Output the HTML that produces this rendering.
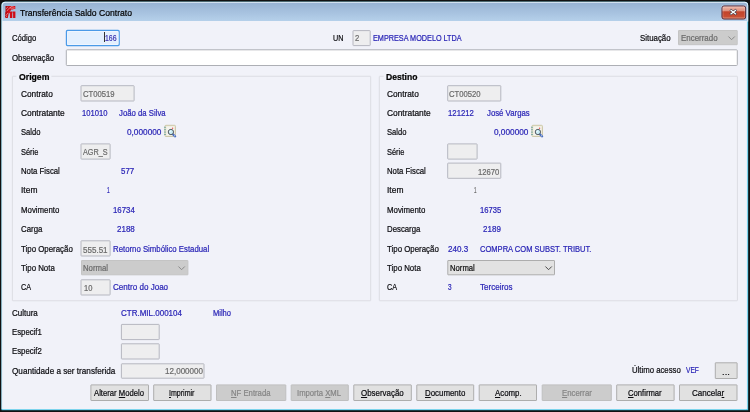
<!DOCTYPE html>
<html><head><meta charset="utf-8"><title>Transferência Saldo Contrato</title>
<style>
html,body{margin:0;padding:0;background:#111;}
body{filter:blur(0.3px);width:750px;height:412px;position:relative;overflow:hidden;font-family:"Liberation Sans",sans-serif;}
.t{position:absolute;white-space:pre;-webkit-text-stroke:0.22px currentColor;font-size:8.8px;line-height:12px;height:12px;transform-origin:0 0;}
.t u{text-decoration:underline;text-decoration-thickness:0.7px;text-underline-offset:0.8px;}
svg{position:absolute;overflow:visible;}
</style></head><body>
<svg style="left:0;top:0" width="750" height="412" viewBox="0 0 750 412">
<defs><linearGradient id="tg" x1="0" y1="0" x2="0" y2="1"><stop offset="0" stop-color="#97b3d4"/><stop offset="0.3" stop-color="#a0bbda"/><stop offset="1" stop-color="#b5d0ea"/></linearGradient></defs>
<path d="M1.5 410.2 V5.4 Q1.5 1.7 5.2 1.7 H744.5 Q748.2 1.7 748.2 5.4 V410.2 Z" fill="#35c1e4"/>
<path d="M1.5 409.2 V5.4 Q1.5 1.7 5.2 1.7 H744.5 Q748.2 1.7 748.2 5.4 V21.4 H747.4 V409.2 Z" fill="#e6f0fa"/>
<path d="M2.5 21 V6 Q2.5 2.7 5.8 2.7 H744.1 Q747.4 2.7 747.4 6 V21 Z" fill="url(#tg)"/>
<rect x="3.1" y="21" width="743" height="388.2" fill="#f1f2f9"/>
</svg>
<svg style="left:0;top:0" width="750" height="412" viewBox="0 0 750 412">
<rect x="12.35" y="76.25" width="358.35" height="224.50" rx="0.5" fill="none" stroke="#dcdde3"/>
<rect x="379.30" y="76.25" width="358.10" height="224.50" rx="0.5" fill="none" stroke="#dcdde3"/>
<rect x="16.4" y="72.0" width="35.0" height="10.0" fill="#f1f2f9"/>
<rect x="383.7" y="72.0" width="35.9" height="10.0" fill="#f1f2f9"/>
<rect x="66.45" y="30.45" width="52.70" height="15.10" rx="1" fill="#e4f0fe" stroke="#4a9ae8" stroke-width="1.3"/>
<rect x="67.50" y="31.50" width="50.60" height="13.00" rx="0.8" fill="none" stroke="#f3f8ff" stroke-width="0.8"/>
<rect x="353.00" y="30.60" width="17.20" height="15.00" rx="0.5" fill="#eeeeef" stroke="#b6b7c0"/>
<rect x="678.50" y="30.50" width="58.70" height="14.20" rx="0.3" fill="#cccccc" stroke="#c4c4c4"/>
<rect x="66.30" y="49.80" width="671.00" height="15.70" rx="0.8" fill="#ffffff" stroke="#adafb5"/>
<rect x="81.00" y="85.70" width="53.10" height="15.30" rx="0.5" fill="#eeeeef" stroke="#b6b7c0"/>
<rect x="81.00" y="143.90" width="29.10" height="15.20" rx="0.5" fill="#eeeeef" stroke="#b6b7c0"/>
<rect x="81.00" y="240.80" width="29.10" height="15.20" rx="0.5" fill="#eeeeef" stroke="#b6b7c0"/>
<rect x="81.00" y="279.80" width="29.10" height="15.20" rx="0.5" fill="#eeeeef" stroke="#b6b7c0"/>
<rect x="81.50" y="260.50" width="106.40" height="14.30" rx="0.3" fill="#cccccc" stroke="#c4c4c4"/>
<rect x="447.70" y="85.70" width="53.10" height="15.30" rx="0.5" fill="#eeeeef" stroke="#b6b7c0"/>
<rect x="447.70" y="143.90" width="29.40" height="15.20" rx="0.5" fill="#eeeeef" stroke="#b6b7c0"/>
<rect x="447.70" y="163.10" width="53.10" height="15.20" rx="0.5" fill="#eeeeef" stroke="#b6b7c0"/>
<rect x="447.80" y="260.50" width="106.70" height="14.30" rx="0.3" fill="#e2e2e2" stroke="#adadad"/>
<rect x="121.40" y="324.40" width="37.80" height="15.20" rx="0.5" fill="#eeeeef" stroke="#b6b7c0"/>
<rect x="121.40" y="343.80" width="37.80" height="15.20" rx="0.5" fill="#eeeeef" stroke="#b6b7c0"/>
<rect x="121.40" y="363.80" width="82.60" height="14.40" rx="0.5" fill="#eeeeef" stroke="#b6b7c0"/>
<rect x="715.30" y="362.80" width="21.80" height="15.70" rx="0.3" fill="#e1e1e1" stroke="#adadad"/>
<rect x="90.90" y="384.90" width="57.60" height="15.60" rx="0.3" fill="#e1e1e1" stroke="#adadad"/>
<rect x="153.70" y="384.90" width="57.30" height="15.60" rx="0.3" fill="#e1e1e1" stroke="#adadad"/>
<rect x="216.50" y="384.90" width="69.30" height="15.60" rx="0.3" fill="#cccccc" stroke="#bfbfbf"/>
<rect x="291.20" y="384.90" width="57.10" height="15.60" rx="0.3" fill="#cccccc" stroke="#bfbfbf"/>
<rect x="353.80" y="384.90" width="57.50" height="15.60" rx="0.3" fill="#e1e1e1" stroke="#adadad"/>
<rect x="416.80" y="384.90" width="56.90" height="15.60" rx="0.3" fill="#e1e1e1" stroke="#adadad"/>
<rect x="479.20" y="384.90" width="57.30" height="15.60" rx="0.3" fill="#e1e1e1" stroke="#adadad"/>
<rect x="542.20" y="384.90" width="69.10" height="15.60" rx="0.3" fill="#cccccc" stroke="#bfbfbf"/>
<rect x="616.70" y="384.90" width="57.40" height="15.60" rx="0.3" fill="#e1e1e1" stroke="#adadad"/>
<rect x="679.50" y="384.90" width="57.50" height="15.60" rx="0.3" fill="#e1e1e1" stroke="#adadad"/>
</svg>
<svg style="left:5px;top:6px" width="10.4" height="12" viewBox="0 0 10.4 12">
<defs><linearGradient id="rg" x1="0" y1="0" x2="1" y2="0"><stop offset="0" stop-color="#a9060c"/><stop offset="0.45" stop-color="#d20c16"/><stop offset="1" stop-color="#d90f1a"/></linearGradient></defs>
<path d="M0.5 0 H10.3 V3 Q8 3.6 6.4 3.3 L4 5.6 L0.5 5.6 Z" fill="url(#rg)"/>
<path d="M0 12 L0.3 6 L3.4 2.2 L6.6 3.2 L3.9 6.8 L2.8 12 Z" fill="url(#rg)"/>
<path d="M4.1 5.6 H7.3 V12 H4.9 V7.2 H4.1 Z" fill="#d00b15"/>
<path d="M7.6 5.6 H10.4 V12 H8.1 V7.2 H7.6 Z" fill="#d00b15"/>
<g stroke="#f3cdd0" stroke-width="0.55" fill="none" stroke-linecap="round"><path d="M2 4.8 Q3.6 2 6.4 0.6"/><path d="M5.4 1.9 Q7.6 1.8 9.3 3.4"/><path d="M7 0.5 Q8.6 0.8 9.6 1.9"/><path d="M0.9 9.6 L2.7 7.2"/><path d="M1.2 2.6 L2.9 0.9"/><path d="M0.7 11.4 L1.6 10.4" /></g>
</svg>
<svg style="left:720.9px;top:4.75px" width="25.6" height="15" viewBox="0 0 25.6 15">
<defs><linearGradient id="cg" x1="0" y1="0" x2="0" y2="1">
<stop offset="0" stop-color="#f0b9ac"/><stop offset="0.41" stop-color="#dc8c79"/><stop offset="0.43" stop-color="#c2432a"/><stop offset="0.8" stop-color="#c84d33"/><stop offset="1" stop-color="#d77558"/></linearGradient></defs>
<rect x="0.1" y="0.1" width="25.4" height="14.8" rx="2.8" fill="#c6daef" opacity="0.85"/>
<rect x="0.95" y="0.95" width="23.7" height="13.1" rx="2" fill="url(#cg)" stroke="#4f2535" stroke-width="1"/>
<rect x="1.95" y="1.95" width="21.7" height="11.1" rx="1.2" fill="none" stroke="#ffffff" stroke-opacity="0.3" stroke-width="0.7"/>
<g stroke-linecap="butt" fill="none"><path d="M9.2 4.75 L15.4 9.45 M15.4 4.75 L9.2 9.45" stroke="#3f3c48" stroke-width="2.5"/><path d="M9.55 5.0 L15.05 9.2 M15.05 5.0 L9.55 9.2" stroke="#ffffff" stroke-width="1.25"/></g>
</svg>
<svg style="left:164.3px;top:124.8px" width="12.4" height="12.6" viewBox="0 0 12.4 12.6">
<rect x="0.9" y="0.3" width="10.6" height="11.2" rx="1" fill="#ece9d8" stroke="#cbc5a3" stroke-width="0.9"/>
<rect x="2.6" y="1.5" width="7.6" height="8.8" fill="#f4f4ee"/>
<g stroke="#5e9d9a" stroke-width="0.75"><line x1="0" y1="2.3" x2="2" y2="2.3"/><line x1="0" y1="4.7" x2="2" y2="4.7"/><line x1="0" y1="7.1" x2="2" y2="7.1"/><line x1="0" y1="9.5" x2="2" y2="9.5"/></g>
<circle cx="8.6" cy="3.3" r="0.75" fill="#ee5a5a"/>
<line x1="8.6" y1="8.9" x2="11.2" y2="11.4" stroke="#4a6fc2" stroke-width="2.1" stroke-linecap="round"/>
<circle cx="10.6" cy="10.8" r="0.5" fill="#e8eefc"/>
<circle cx="6.9" cy="7" r="2.65" fill="#c8ebf5" stroke="#3c3f46" stroke-width="0.85"/>
<circle cx="6.3" cy="6.3" r="0.9" fill="#e6f7fb"/>
</svg>
<svg style="left:530.9px;top:124.8px" width="12.4" height="12.6" viewBox="0 0 12.4 12.6">
<rect x="0.9" y="0.3" width="10.6" height="11.2" rx="1" fill="#ece9d8" stroke="#cbc5a3" stroke-width="0.9"/>
<rect x="2.6" y="1.5" width="7.6" height="8.8" fill="#f4f4ee"/>
<g stroke="#5e9d9a" stroke-width="0.75"><line x1="0" y1="2.3" x2="2" y2="2.3"/><line x1="0" y1="4.7" x2="2" y2="4.7"/><line x1="0" y1="7.1" x2="2" y2="7.1"/><line x1="0" y1="9.5" x2="2" y2="9.5"/></g>
<circle cx="8.6" cy="3.3" r="0.75" fill="#ee5a5a"/>
<line x1="8.6" y1="8.9" x2="11.2" y2="11.4" stroke="#4a6fc2" stroke-width="2.1" stroke-linecap="round"/>
<circle cx="10.6" cy="10.8" r="0.5" fill="#e8eefc"/>
<circle cx="6.9" cy="7" r="2.65" fill="#c8ebf5" stroke="#3c3f46" stroke-width="0.85"/>
<circle cx="6.3" cy="6.3" r="0.9" fill="#e6f7fb"/>
</svg>
<svg style="left:728.1px;top:35.7px" width="7.2" height="4.4" viewBox="0 0 7.2 4.4"><polyline points="0.4,0.5 3.6,3.7 6.8,0.5" fill="none" stroke="#8a8a8a" stroke-width="1"/></svg>
<svg style="left:178.3px;top:265.6px" width="7.2" height="4.4" viewBox="0 0 7.2 4.4"><polyline points="0.4,0.5 3.6,3.7 6.8,0.5" fill="none" stroke="#8a8a8a" stroke-width="1"/></svg>
<svg style="left:544.7px;top:265.7px" width="7.2" height="4.4" viewBox="0 0 7.2 4.4"><polyline points="0.4,0.5 3.6,3.7 6.8,0.5" fill="none" stroke="#4a4a4a" stroke-width="1"/></svg>
<div style="position:absolute;left:104.2px;top:32.3px;width:0.8px;height:9.5px;background:#333"></div>
<span class="t" style="left:20.0px;top:7.01px;color:#000;transform:scaleX(0.905);font-size:9.5px;">Transferência Saldo Contrato</span>
<span class="t" style="left:11.9px;top:32.25px;color:#0c0c10;transform:scaleX(0.871);">Código</span>
<span class="t" style="left:11.9px;top:52.25px;color:#0c0c10;transform:scaleX(0.890);">Observação</span>
<span class="t" style="left:332.8px;top:32.25px;color:#0c0c10;transform:scaleX(0.818);">UN</span>
<span class="t" style="left:640.4px;top:32.25px;color:#0c0c10;transform:scaleX(0.894);">Situação</span>
<span class="t" style="left:373.3px;top:32.25px;color:#2a25b6;transform:scaleX(0.825);">EMPRESA MODELO LTDA</span>
<span class="t" style="left:105.3px;top:32.25px;color:#3b35b0;transform:scaleX(0.783);">166</span>
<span class="t" style="left:355.3px;top:32.25px;color:#6a6a6a;transform:scaleX(0.876);">2</span>
<span class="t" style="left:680.8px;top:32.25px;color:#6a6a6a;transform:scaleX(0.902);">Encerrado</span>
<span class="t" style="left:20.6px;top:88.25px;color:#0c0c10;transform:scaleX(0.942);">Contrato</span>
<span class="t" style="left:20.6px;top:107.25px;color:#0c0c10;transform:scaleX(0.952);">Contratante</span>
<span class="t" style="left:20.6px;top:126.25px;color:#0c0c10;transform:scaleX(0.862);">Saldo</span>
<span class="t" style="left:20.6px;top:146.25px;color:#0c0c10;transform:scaleX(0.847);">Série</span>
<span class="t" style="left:20.6px;top:165.25px;color:#0c0c10;transform:scaleX(0.882);">Nota Fiscal</span>
<span class="t" style="left:20.6px;top:184.25px;color:#0c0c10;transform:scaleX(0.959);">Item</span>
<span class="t" style="left:20.6px;top:204.25px;color:#0c0c10;transform:scaleX(0.892);">Movimento</span>
<span class="t" style="left:20.6px;top:223.25px;color:#0c0c10;transform:scaleX(0.893);">Carga</span>
<span class="t" style="left:20.6px;top:243.25px;color:#0c0c10;transform:scaleX(0.895);">Tipo Operação</span>
<span class="t" style="left:20.6px;top:262.25px;color:#0c0c10;transform:scaleX(0.894);">Tipo Nota</span>
<span class="t" style="left:20.6px;top:281.25px;color:#0c0c10;transform:scaleX(0.817);">CA</span>
<span class="t" style="left:387.3px;top:88.25px;color:#0c0c10;transform:scaleX(0.942);">Contrato</span>
<span class="t" style="left:387.3px;top:107.25px;color:#0c0c10;transform:scaleX(0.952);">Contratante</span>
<span class="t" style="left:387.3px;top:126.25px;color:#0c0c10;transform:scaleX(0.862);">Saldo</span>
<span class="t" style="left:387.3px;top:146.25px;color:#0c0c10;transform:scaleX(0.847);">Série</span>
<span class="t" style="left:387.3px;top:165.25px;color:#0c0c10;transform:scaleX(0.882);">Nota Fiscal</span>
<span class="t" style="left:387.3px;top:184.25px;color:#0c0c10;transform:scaleX(0.959);">Item</span>
<span class="t" style="left:387.3px;top:204.25px;color:#0c0c10;transform:scaleX(0.892);">Movimento</span>
<span class="t" style="left:387.3px;top:223.25px;color:#0c0c10;transform:scaleX(0.887);">Descarga</span>
<span class="t" style="left:387.3px;top:243.25px;color:#0c0c10;transform:scaleX(0.895);">Tipo Operação</span>
<span class="t" style="left:387.3px;top:262.25px;color:#0c0c10;transform:scaleX(0.894);">Tipo Nota</span>
<span class="t" style="left:387.3px;top:281.25px;color:#0c0c10;transform:scaleX(0.817);">CA</span>
<span class="t" style="left:18.6px;top:71.25px;color:#000;transform:scaleX(0.987);font-weight:bold;">Origem</span>
<span class="t" style="left:385.9px;top:71.25px;color:#000;transform:scaleX(0.973);font-weight:bold;">Destino</span>
<span class="t" style="left:82.8px;top:88.25px;color:#6a6a6a;transform:scaleX(0.873);">CT00519</span>
<span class="t" style="left:81.6px;top:107.25px;color:#2a25b6;transform:scaleX(0.865);">101010</span>
<span class="t" style="left:119.4px;top:107.25px;color:#2a25b6;transform:scaleX(0.882);">João da Silva</span>
<span class="t" style="left:126.6px;top:126.25px;color:#2a25b6;transform:scaleX(0.937);">0,000000</span>
<span class="t" style="left:83.0px;top:146.25px;color:#6a6a6a;transform:scaleX(0.825);">AGR_S</span>
<span class="t" style="left:121.2px;top:165.25px;color:#2a25b6;transform:scaleX(0.899);">577</span>
<span class="t" style="left:107.3px;top:184.25px;color:#2a25b6;transform:scaleX(0.550);">1</span>
<span class="t" style="left:112.6px;top:204.25px;color:#2a25b6;transform:scaleX(0.891);">16734</span>
<span class="t" style="left:116.6px;top:223.25px;color:#2a25b6;transform:scaleX(0.909);">2188</span>
<span class="t" style="left:83.4px;top:244.25px;color:#6a6a6a;transform:scaleX(0.914);">555.51</span>
<span class="t" style="left:113.4px;top:243.25px;color:#2a25b6;transform:scaleX(0.886);">Retorno Simbólico Estadual</span>
<span class="t" style="left:83.4px;top:262.25px;color:#6a6a6a;transform:scaleX(0.882);">Normal</span>
<span class="t" style="left:83.6px;top:282.25px;color:#6a6a6a;transform:scaleX(0.857);">10</span>
<span class="t" style="left:113.4px;top:281.25px;color:#2a25b6;transform:scaleX(0.916);">Centro do Joao</span>
<span class="t" style="left:449.2px;top:88.25px;color:#6a6a6a;transform:scaleX(0.873);">CT00520</span>
<span class="t" style="left:448.1px;top:107.25px;color:#2a25b6;transform:scaleX(0.882);">121212</span>
<span class="t" style="left:486.5px;top:107.25px;color:#2a25b6;transform:scaleX(0.885);">José Vargas</span>
<span class="t" style="left:493.5px;top:126.25px;color:#2a25b6;transform:scaleX(0.937);">0,000000</span>
<span class="t" style="left:478.0px;top:166.25px;color:#6a6a6a;transform:scaleX(0.870);">12670</span>
<span class="t" style="left:474.2px;top:184.25px;color:#6a6a6a;transform:scaleX(0.510);">1</span>
<span class="t" style="left:479.9px;top:204.25px;color:#2a25b6;transform:scaleX(0.870);">16735</span>
<span class="t" style="left:483.3px;top:223.25px;color:#2a25b6;transform:scaleX(0.914);">2189</span>
<span class="t" style="left:447.9px;top:243.25px;color:#2a25b6;transform:scaleX(0.918);">240.3</span>
<span class="t" style="left:480.1px;top:243.25px;color:#2a25b6;transform:scaleX(0.858);">COMPRA COM SUBST. TRIBUT.</span>
<span class="t" style="left:450.0px;top:262.25px;color:#111;transform:scaleX(0.874);">Normal</span>
<span class="t" style="left:448.0px;top:281.25px;color:#2a25b6;transform:scaleX(0.734);">3</span>
<span class="t" style="left:480.1px;top:281.25px;color:#2a25b6;transform:scaleX(0.913);">Terceiros</span>
<span class="t" style="left:11.6px;top:307.25px;color:#0c0c10;transform:scaleX(0.910);">Cultura</span>
<span class="t" style="left:11.6px;top:326.25px;color:#0c0c10;transform:scaleX(0.883);">Especif1</span>
<span class="t" style="left:11.6px;top:345.25px;color:#0c0c10;transform:scaleX(0.883);">Especif2</span>
<span class="t" style="left:11.6px;top:365.25px;color:#0c0c10;transform:scaleX(0.927);">Quantidade a ser transferida</span>
<span class="t" style="left:120.6px;top:307.25px;color:#2a25b6;transform:scaleX(0.910);">CTR.MIL.000104</span>
<span class="t" style="left:213.0px;top:307.25px;color:#2a25b6;transform:scaleX(0.856);">Milho</span>
<span class="t" style="left:165.0px;top:365.25px;color:#6a6a6a;transform:scaleX(0.914);">12,000000</span>
<span class="t" style="left:632.0px;top:364.25px;color:#0c0c10;transform:scaleX(0.883);">Último acesso</span>
<span class="t" style="left:686.4px;top:364.25px;color:#2a25b6;transform:scaleX(0.754);">VEF</span>
<span class="t" style="left:722.1px;top:366.25px;color:#0c0c10;transform:scaleX(1.076);">...</span>
<span class="t" style="left:94.0px;top:387.25px;color:#0c0c10;transform:scaleX(0.874);">Alterar <u>M</u>odelo</span>
<span class="t" style="left:169.0px;top:387.25px;color:#0c0c10;transform:scaleX(0.800);"><u>I</u>mprimir</span>
<span class="t" style="left:231.2px;top:387.25px;color:#858585;transform:scaleX(0.878);"><u>N</u>F Entrada</span>
<span class="t" style="left:297.3px;top:387.25px;color:#858585;transform:scaleX(0.874);">Importa <u>X</u>ML</span>
<span class="t" style="left:361.3px;top:387.25px;color:#0c0c10;transform:scaleX(0.900);"><u>O</u>bservação</span>
<span class="t" style="left:424.5px;top:387.25px;color:#0c0c10;transform:scaleX(0.896);"><u>D</u>ocumento</span>
<span class="t" style="left:494.7px;top:387.25px;color:#0c0c10;transform:scaleX(0.892);"><u>A</u>comp.</span>
<span class="t" style="left:561.7px;top:387.25px;color:#858585;transform:scaleX(0.886);"><u>E</u>ncerrar</span>
<span class="t" style="left:628.3px;top:387.25px;color:#0c0c10;transform:scaleX(0.872);"><u>C</u>onfirmar</span>
<span class="t" style="left:691.9px;top:387.25px;color:#0c0c10;transform:scaleX(0.917);">Cancela<u>r</u></span>
</body></html>
